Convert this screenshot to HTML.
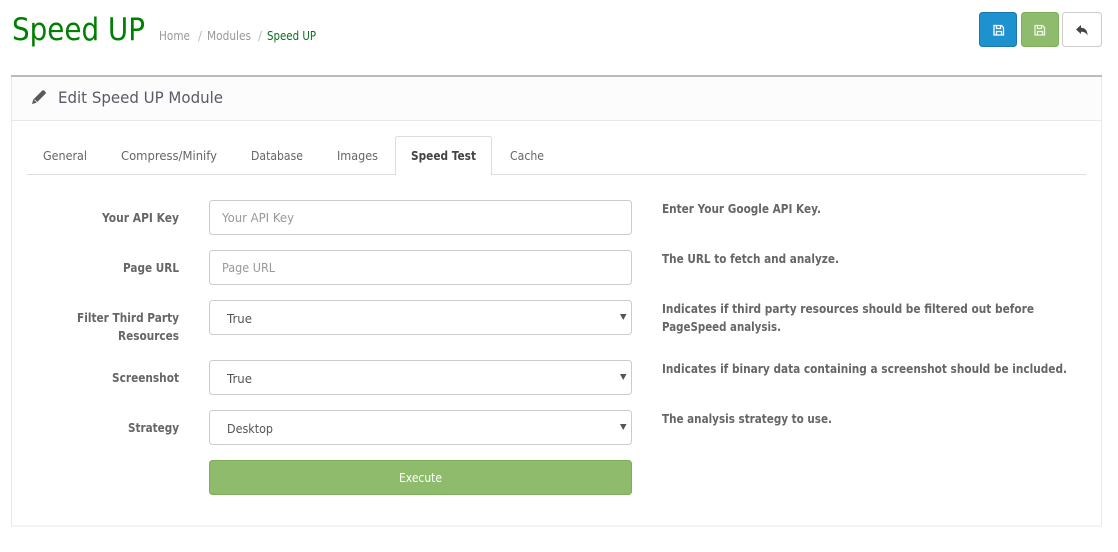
<!DOCTYPE html>
<html><head><meta charset="utf-8"><style>
html,body{margin:0;padding:0;background:#fff;width:1118px;height:552px;overflow:hidden}
svg{display:block}
text{font-family:"DejaVu Sans",sans-serif;font-size:12px}
.b{font-weight:bold;fill:#666;font-size:12px}
.f{fill:#fff;stroke:#ccc;stroke-width:1}
</style></head><body>
<svg width="1118" height="552" viewBox="0 0 1118 552" xmlns="http://www.w3.org/2000/svg">
<text x="12" y="40" style="font-size:31px" fill="#008000" textLength="133" lengthAdjust="spacingAndGlyphs">Speed UP</text>
<g fill="#999">
<text x="159" y="40" textLength="31" lengthAdjust="spacingAndGlyphs">Home</text>
<text x="198" y="40" fill="#bbb">/</text>
<text x="207" y="40" textLength="44" lengthAdjust="spacingAndGlyphs">Modules</text>
<text x="258" y="40" fill="#bbb">/</text>
</g>
<text x="267" y="40" fill="#0a6e1e" textLength="49" lengthAdjust="spacingAndGlyphs">Speed UP</text>

<rect x="979.500" y="12.500" width="37" height="34" rx="3" fill="#1e91cf" stroke="#1978ab"/>
<rect x="1021.500" y="12.500" width="37" height="34" rx="3" fill="#8fbb6c" stroke="#7fae5a"/>
<rect x="1062.500" y="12.500" width="39" height="34" rx="3" fill="#fff" stroke="#ccc"/>
<g fill="none" stroke="#fff" stroke-width="1.300">
<path d="M994 25.500h7.500l2 2v7.500h-9.500z"/><path d="M996.500 25.500v3h4v-3M996.500 35v-3.500h5V35"/>
</g>
<g fill="none" stroke="#eef5e6" stroke-width="1.300">
<path d="M1035 25.500h7.500l2 2v7.500h-9.500z"/><path d="M1037.500 25.500v3h4v-3M1037.500 35v-3.500h5V35"/>
</g>
<path d="M1076 29.500l5-4.500v2.800c4 .2 6.500 2.400 6.500 7.700-1.200-2.700-3.200-3.800-6.500-3.800v2.300z" fill="#444"/>

<rect x="11.500" y="76" width="1090" height="450" fill="#fff" stroke="#e8e8e8"/>
<rect x="11" y="75" width="1091" height="2" fill="#bbb"/>
<rect x="12" y="77" width="1089" height="43" fill="#fcfcfc"/>
<rect x="12" y="120" width="1089" height="1" fill="#e8e8e8"/>
<path d="M32 104l1.300-4.500 9-9c.5-.5 1.200-.5 1.700 0l1.500 1.500c.5.500.5 1.200 0 1.700l-9 9z" fill="#595959"/>
<path d="M34.500 99.800l2.700 2.700" stroke="#fcfcfc" stroke-width=".8"/>
<text x="58" y="103" style="font-size:16px" fill="#5a5a66" textLength="165" lengthAdjust="spacingAndGlyphs">Edit Speed UP Module</text>

<rect x="27" y="174" width="1059" height="1" fill="#ddd"/>
<path d="M395.500 175v-36.500a2 2 0 0 1 2-2h92a2 2 0 0 1 2 2V175" fill="#fff" stroke="#ddd"/>
<text x="43" y="160" textLength="44" lengthAdjust="spacingAndGlyphs" fill="#666">General</text>
<text x="121" y="160" textLength="96" lengthAdjust="spacingAndGlyphs" fill="#666">Compress/Minify</text>
<text x="251" y="160" textLength="52" lengthAdjust="spacingAndGlyphs" fill="#666">Database</text>
<text x="337" y="160" textLength="41" lengthAdjust="spacingAndGlyphs" fill="#666">Images</text>
<text x="510" y="160" textLength="34" lengthAdjust="spacingAndGlyphs" fill="#666">Cache</text>
<text x="411" y="160" textLength="65" lengthAdjust="spacingAndGlyphs" fill="#444" style="font-weight:bold">Speed Test</text>

<text class="b" x="102" y="222" textLength="77" lengthAdjust="spacingAndGlyphs">Your API Key</text>
<text class="b" x="123" y="272" textLength="56" lengthAdjust="spacingAndGlyphs">Page URL</text>
<text class="b" x="77" y="322" textLength="102" lengthAdjust="spacingAndGlyphs">Filter Third Party</text>
<text class="b" x="118" y="340" textLength="61" lengthAdjust="spacingAndGlyphs">Resources</text>
<text class="b" x="112" y="382" textLength="67" lengthAdjust="spacingAndGlyphs">Screenshot</text>
<text class="b" x="128" y="432" textLength="51" lengthAdjust="spacingAndGlyphs">Strategy</text>

<rect class="f" x="209.500" y="200.500" width="422" height="34" rx="3"/>
<rect class="f" x="209.500" y="250.500" width="422" height="34" rx="3"/>
<rect class="f" x="209.500" y="300.500" width="422" height="34" rx="3"/>
<rect class="f" x="209.500" y="360.500" width="422" height="34" rx="3"/>
<rect class="f" x="209.500" y="410.500" width="422" height="34" rx="3"/>
<text x="222" y="222" fill="#999" textLength="72" lengthAdjust="spacingAndGlyphs">Your API Key</text>
<text x="222" y="272" fill="#999" textLength="53" lengthAdjust="spacingAndGlyphs">Page URL</text>
<text x="227" y="323" fill="#555" textLength="25" lengthAdjust="spacingAndGlyphs">True</text>
<text x="227" y="383" fill="#555" textLength="25" lengthAdjust="spacingAndGlyphs">True</text>
<text x="227" y="433" fill="#555" textLength="46" lengthAdjust="spacingAndGlyphs">Desktop</text>
<g fill="#555">
<path d="M620 314h6.500l-3.250 6z"/>
<path d="M620 374h6.500l-3.250 6z"/>
<path d="M620 424h6.500l-3.250 6z"/>
</g>

<text class="b" x="662" y="213" textLength="159" lengthAdjust="spacingAndGlyphs">Enter Your Google API Key.</text>
<text class="b" x="662" y="263" textLength="177" lengthAdjust="spacingAndGlyphs">The URL to fetch and analyze.</text>
<text class="b" x="662" y="313" textLength="372" lengthAdjust="spacingAndGlyphs">Indicates if third party resources should be filtered out before</text>
<text class="b" x="662" y="331" textLength="119" lengthAdjust="spacingAndGlyphs">PageSpeed analysis.</text>
<text class="b" x="662" y="373" textLength="405" lengthAdjust="spacingAndGlyphs">Indicates if binary data containing a screenshot should be included.</text>
<text class="b" x="662" y="423" textLength="170" lengthAdjust="spacingAndGlyphs">The analysis strategy to use.</text>

<rect x="209.500" y="460.500" width="422" height="34" rx="3" fill="#8fbb6c" stroke="#7fae5a"/>
<text x="399" y="482" fill="#fff" textLength="43" lengthAdjust="spacingAndGlyphs">Execute</text>
</svg>
</body></html>
